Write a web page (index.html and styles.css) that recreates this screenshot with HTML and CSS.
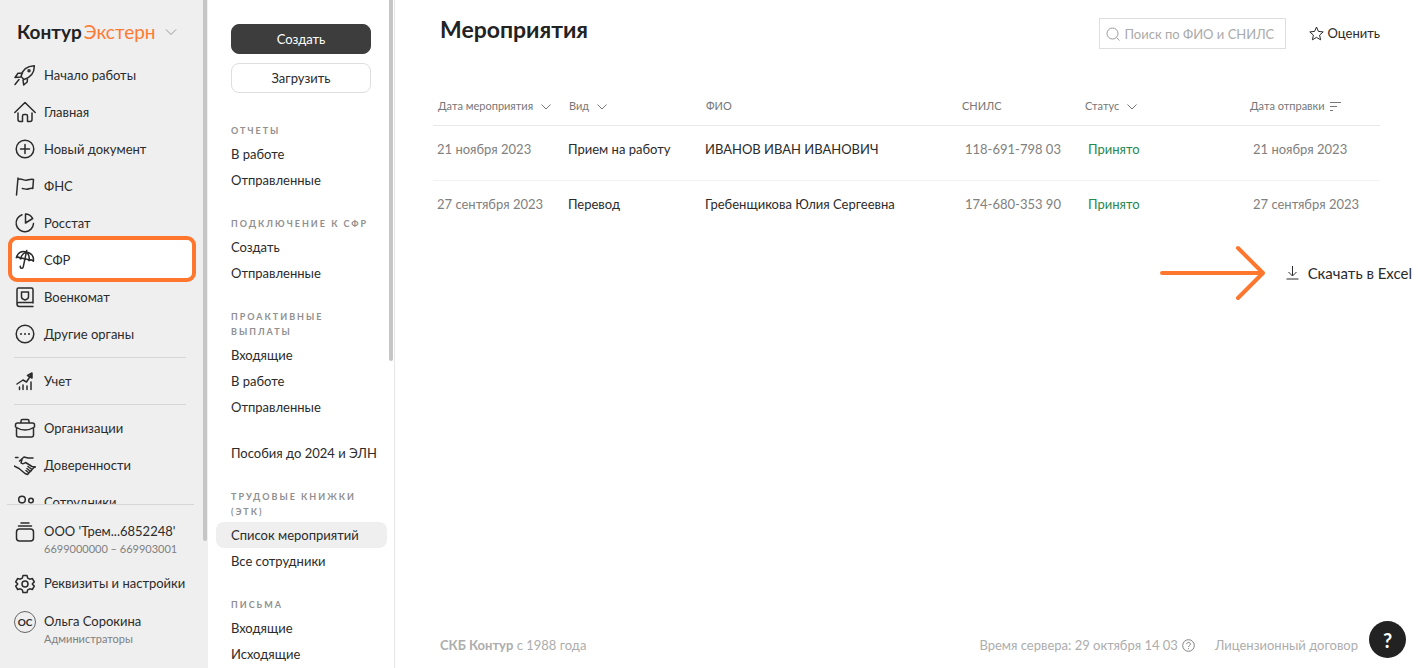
FILE: index.html
```
<!DOCTYPE html>
<html lang="ru">
<head>
    <meta charset="UTF-8">
    <meta name="viewport" content="width=device-width, initial-scale=1.0">
    <title>Мероприятия — Контур.Экстерн</title>
    <link rel="stylesheet" href="styles.css">
</head>
<body>
    <div class="app">
        <!-- Главное меню -->
        <aside class="sidebar">
            <button type="button" class="logo">
                <span class="logo-text"><b>Контур</b><span class="logo-product">Экстерн</span></span>
                <svg class="chevron" width="12" height="8" viewBox="0 0 12 8"><path d="M1 1.5l5 5 5-5"/></svg>
            </button>
            <nav class="menu">
                <a href="#" class="menu-item">
                    <svg class="icon" viewBox="0 0 22 22"><path d="M7 12.500C8 7 12 2 20.300 1.700 20.500 9 16 13.500 10 15.500zM8.500 9L4 9.300 1 13.500l5.500-.5M13.500 14l-.3 4-3.500 3-.7-5M5 15.500l-4 5"/><circle cx="15" cy="6.800" r="1"/></svg>
                    <span>Начало работы</span>
                </a>
                <a href="#" class="menu-item">
                    <svg class="icon" viewBox="0 0 22 22"><path d="M.8 11.500L11 1.500l10.200 10M4 12v6.500q0 2 2 2h2.500V15q0-1.500 1.500-1.500h2q1.500 0 1.500 1.500v5.500H16q2 0 2-2V12"/></svg>
                    <span>Главная</span>
                </a>
                <a href="#" class="menu-item">
                    <svg class="icon" viewBox="0 0 22 22"><circle cx="11" cy="11" r="8.800"/><path d="M11 6.500v9M6.500 11h9"/></svg>
                    <span>Новый документ</span>
                </a>
                <a href="#" class="menu-item">
                    <svg class="icon" viewBox="0 0 22 22"><path d="M4 3L2.500 20M4 4.500c3-2 5.500 1.300 8.500.8 2.500-.5 4-1.500 7-.8l-.7 9c-2.500-.8-4 .7-6 .8-2 0-2.500-.8-4.500-.8"/></svg>
                    <span>ФНС</span>
                </a>
                <a href="#" class="menu-item">
                    <svg class="icon" viewBox="0 0 22 22"><path d="M8 2.800a8.700 8.700 0 1 0 11.500 8.700M11.500 11V2c3 0 5.500 1.500 7.200 4.500z"/></svg>
                    <span>Росстат</span>
                </a>
                <a href="#" class="menu-item active">
                    <svg class="icon" viewBox="0 0 22 22"><g transform="rotate(12 11 11)"><path d="M2 10.500C2.500 5.500 6 2.800 10.700 2.800s8.300 2.700 8.800 7.700c-1.500-1.200-3.200-1.100-4.500.3-1.300-1.400-3-1.400-4.300 0-1.300-1.400-3-1.400-4.300 0-1.300-1.400-3-1.500-4.400-.3zM6.400 10.500c0-3.500 1.600-6 4.300-7.700 2.700 1.700 4.300 4.200 4.300 7.700M10.700 1.300V18c0 2.300-3 2.300-3 0"/></g></svg>
                    <span>СФР</span>
                </a>
                <a href="#" class="menu-item">
                    <svg class="icon" viewBox="0 0 22 22"><path d="M19 17V3.500Q19 2 17.500 2h-13Q3 2 3 3.500V18q0 2.500 2.500 2.500H19M3 18q0-1.500 1.500-1.500H19M7.500 6h7v5q0 2-3.500 3-3.500-1-3.500-3z"/></svg>
                    <span>Военкомат</span>
                </a>
                <a href="#" class="menu-item">
                    <svg class="icon" viewBox="0 0 22 22"><circle cx="11" cy="11" r="8.800"/><path class="dots" d="M7 11h.01M11 11h.01M15 11h.01"/></svg>
                    <span>Другие органы</span>
                </a>
                <hr class="menu-line">
                <a href="#" class="menu-item">
                    <svg class="icon" viewBox="0 0 22 22"><path d="M3 14l6-4 3.500 2L17 5M13.500 5.500L18 3v5zM5.500 17v2.500M9 15v4.500M13 16v3.500M17 12v7.500"/></svg>
                    <span>Учет</span>
                </a>
                <hr class="menu-line">
                <a href="#" class="menu-item">
                    <svg class="icon" viewBox="0 0 22 22"><path d="M7 5.500V4q0-1.500 1.500-1.500h5Q15 2.500 15 4v1.500M3.500 6h15Q20.500 6 20.500 8v2Q16 13 11 13T1.500 10V8q0-2 2-2zM2.500 11.500V18q0 2 2 2h13q2 0 2-2v-6.500"/></svg>
                    <span>Организации</span>
                </a>
                <a href="#" class="menu-item">
                    <svg class="icon" viewBox="0 0 22 22"><path d="M1.500 3.500H4M0 12l5 2.500 6 5 2.500 1 1.500-1.500-3-2.500M14.500 19l2-1.500-3.500-3M16.500 17.500l1.500-2-4-3M18 15.500l2-2M5.500 7L10 3l4 1h5M8 5.500L7 9q2 1.500 4.500-.5L14 10l4 2.500 4 .5"/></svg>
                    <span>Доверенности</span>
                </a>
                <a href="#" class="menu-item">
                    <svg class="icon" viewBox="0 0 22 22"><circle cx="8" cy="8.500" r="3.300"/><circle cx="17" cy="9.500" r="2.300"/><path d="M3 17q0-3.500 5-3.500t5 3.500"/></svg>
                    <span>Сотрудники</span>
                </a>
            </nav>
            <div class="account">
                <a href="#" class="account-item">
                    <svg class="icon" viewBox="0 0 22 22"><path d="M7 2h8M4.500 5h13"/><rect x="2.500" y="8" width="17" height="12" rx="3"/></svg>
                    <span>ООО 'Трем...6852248'<small>6699000000 – 669903001</small></span>
                </a>
                <a href="#" class="account-item">
                    <svg class="icon" viewBox="0 0 22 22"><circle cx="11" cy="11" r="3"/><path d="M9 2.500h4l.7 2.600 2 1.100 2.600-.7 2 3.400-1.900 1.900v.4l1.900 1.900-2 3.400-2.600-.7-2 1.100-.7 2.600H9l-.7-2.600-2-1.100-2.600.7-2-3.400 1.900-1.900v-.4L1.700 8.900l2-3.400 2.600.7 2-1.100z"/></svg>
                    <span>Реквизиты и настройки</span>
                </a>
                <a href="#" class="account-item">
                    <span class="avatar">ОС</span>
                    <span>Ольга Сорокина<small>Администраторы</small></span>
                </a>
            </div>
        </aside>

        <!-- Меню раздела СФР -->
        <aside class="submenu">
            <div class="submenu-buttons">
                <button type="button" class="btn btn-dark">Создать</button>
                <button type="button" class="btn">Загрузить</button>
            </div>
            <nav>
                <h3>Отчеты</h3>
                <a href="#">В работе</a>
                <a href="#">Отправленные</a>
                <h3>Подключение к СФР</h3>
                <a href="#">Создать</a>
                <a href="#">Отправленные</a>
                <h3>Проактивные выплаты</h3>
                <a href="#">Входящие</a>
                <a href="#">В работе</a>
                <a href="#">Отправленные</a>
                <a href="#" class="separate">Пособия до 2024 и ЭЛН</a>
                <h3>Трудовые книжки (ЭТК)</h3>
                <a href="#" class="current">Список мероприятий</a>
                <a href="#">Все сотрудники</a>
                <h3>Письма</h3>
                <a href="#">Входящие</a>
                <a href="#">Исходящие</a>
            </nav>
        </aside>

        <main class="content">
            <header class="page-header">
                <h1>Мероприятия</h1>
                <label class="search">
                    <svg width="14" height="14" viewBox="0 0 14 14"><circle cx="6.500" cy="6.500" r="5.500"/><path d="M10.500 10.500l3 3"/></svg>
                    <input type="text" placeholder="Поиск по ФИО и СНИЛС" aria-label="Поиск по ФИО и СНИЛС">
                </label>
                <button type="button" class="rate">
                    <svg width="15" height="15" viewBox="0 0 15 15"><path d="M7.500 1l1.900 4.400 4.800.5-3.600 3.200 1 4.700-4.100-2.400-4.100 2.400 1-4.700L.8 5.900l4.800-.5z"/></svg>
                    Оценить
                </button>
            </header>

            <table class="events">
                <colgroup>
                    <col class="col-date">
                    <col class="col-type">
                    <col class="col-name">
                    <col class="col-snils">
                    <col class="col-status">
                    <col>
                </colgroup>
                <thead>
                    <tr>
                        <th>Дата мероприятия <svg class="arrow" width="10" height="6" viewBox="0 0 10 6"><path d="M.5 .5L5 5l4.500-4.500"/></svg></th>
                        <th>Вид <svg class="arrow" width="10" height="6" viewBox="0 0 10 6"><path d="M.5 .5L5 5l4.500-4.500"/></svg></th>
                        <th>ФИО</th>
                        <th>СНИЛС</th>
                        <th>Статус <svg class="arrow" width="10" height="6" viewBox="0 0 10 6"><path d="M.5 .5L5 5l4.500-4.500"/></svg></th>
                        <th>Дата отправки <svg class="sort" width="12" height="9" viewBox="0 0 12 9"><path d="M1 .5h11M1 4.500h7M1 8.500h3"/></svg></th>
                    </tr>
                </thead>
                <tbody>
                    <tr>
                        <td class="muted">21 ноября 2023</td>
                        <td>Прием на работу</td>
                        <td>ИВАНОВ ИВАН ИВАНОВИЧ</td>
                        <td class="muted shifted">118-691-798 03</td>
                        <td class="accepted shifted">Принято</td>
                        <td class="muted shifted">21 ноября 2023</td>
                    </tr>
                    <tr>
                        <td class="muted">27 сентября 2023</td>
                        <td>Перевод</td>
                        <td>Гребенщикова Юлия Сергеевна</td>
                        <td class="muted shifted">174-680-353 90</td>
                        <td class="accepted shifted">Принято</td>
                        <td class="muted shifted">27 сентября 2023</td>
                    </tr>
                </tbody>
            </table>

            <div class="export">
                <svg class="pointer" width="106" height="56" viewBox="0 0 106 56"><path d="M2 28h101M78 3l25 25-25 25"/></svg>
                <a href="#" class="download">
                    <svg width="13" height="14" viewBox="0 0 13 14"><path d="M6.500 0v9.500M2.500 6l4 4 4-4M.5 13h12"/></svg>
                    Скачать в Excel
                </a>
            </div>

            <footer class="footer">
                <span class="company"><b>СКБ Контур</b> с 1988 года</span>
                <span class="server-time">
                    Время сервера: 29 октября 14 03
                    <svg width="13" height="13" viewBox="0 0 13 13"><circle cx="6.500" cy="6.500" r="5.800"/><path d="M4.700 5.200c0-2.400 3.700-2.400 3.700 0 0 1.300-1.900 1.300-1.900 2.800M6.500 9.200v1"/></svg>
                </span>
                <a href="#">Лицензионный договор</a>
            </footer>
        </main>
    </div>
    <button type="button" class="help" aria-label="Помощь">?</button>
</body>
</html>
```
FILE: styles.css
```
* {
    box-sizing: border-box;
}
body {
    margin: 0;
    font-family: Lato, "Liberation Sans", sans-serif;
    font-size: 13px;
    line-height: 20px;
    color: #2b2b2b;
    background-color: #fff;
}
a {
    color: inherit;
    text-decoration: none;
}
button {
    font: inherit;
    color: inherit;
    cursor: pointer;
}
svg {
    flex: none;
    fill: none;
    stroke: currentColor;
}
.app {
    display: flex;
    height: 100vh;
    overflow: hidden;
}

/* Главное меню */
.sidebar {
    position: relative;
    display: flex;
    flex-direction: column;
    flex: none;
    width: 208px;
    background-color: #efefef;
}
.sidebar::after,
.submenu::after {
    content: "";
    position: absolute;
    top: 0;
    right: 1px;
    width: 4px;
    height: 81%;
    border-radius: 0 0 2px 2px;
    background-color: #c6c6c6;
}
.logo {
    display: flex;
    align-items: center;
    gap: 9px;
    flex: none;
    height: 56px;
    padding: 8px 0 0 17px;
    border: 0;
    background: none;
}
.logo-text {
    font-size: 19px;
    color: #222;
}
.logo-product {
    margin-left: 2px;
    color: #ff7a33;
}
.chevron {
    color: #999;
}
.menu {
    flex: 1;
    min-height: 0;
    overflow: hidden;
}
.menu-item {
    position: relative;
    display: flex;
    align-items: center;
    gap: 8px;
    height: 37px;
    padding-left: 14px;
}
.menu-item > * {
    position: relative;
}
.icon {
    width: 22px;
    height: 22px;
    stroke-width: 1.5;
    stroke-linecap: round;
    stroke-linejoin: round;
}
.icon .dots {
    stroke-width: 2;
}
.menu-item.active::before {
    content: "";
    position: absolute;
    inset: -5px 12px -4px 8px;
    border: 4px solid #ff762e;
    border-radius: 9px;
    background-color: #fff;
}
.menu-line {
    margin: 5px 22px 4px 14px;
    border: 0;
    border-top: 1px solid #d6d6d6;
}
.account {
    display: flex;
    flex-direction: column;
    gap: 16px;
    margin: 0 14px 0 7px;
    padding: 16px 0 21px 7px;
    border-top: 1px solid #d6d6d6;
}
.account-item {
    display: flex;
    gap: 8px;
    white-space: nowrap;
}
.account-item small {
    display: block;
    font-size: 11px;
    line-height: 16px;
    color: #808080;
}
.avatar {
    flex: none;
    width: 22px;
    height: 22px;
    border: 1px solid #666;
    border-radius: 50%;
    font-size: 10px;
    font-weight: bold;
    text-align: center;
}

/* Меню раздела */
.submenu {
    position: relative;
    flex: none;
    width: 187px;
    padding: 24px 7px 0 8px;
    border-right: 1px solid #e6e6e6;
    overflow: hidden;
}
.submenu::after {
    height: 54%;
}
.submenu-buttons {
    display: flex;
    flex-direction: column;
    gap: 9px;
    padding: 0 16px 0 15px;
    margin-bottom: 30px;
}
.btn {
    height: 30px;
    border: 1px solid #dedede;
    border-radius: 8px;
    background-color: #fff;
}
.btn-dark {
    border-color: #3d3d3d;
    color: #fff;
    background-color: #3d3d3d;
}
.submenu h3 {
    margin: 23px 0 3px;
    padding-left: 15px;
    font-size: 9px;
    line-height: 15px;
    letter-spacing: 2px;
    text-transform: uppercase;
    color: #909090;
}
.submenu h3:first-child {
    margin-top: 0;
}
.submenu nav a {
    display: block;
    padding: 3px 0 3px 15px;
    border-radius: 8px;
    white-space: nowrap;
}
.submenu nav .separate {
    margin-top: 20px;
}
.submenu nav .current {
    background-color: #efefef;
}

/* Содержимое */
.content {
    display: flex;
    flex-direction: column;
    flex: 1;
    min-width: 0;
    padding: 18px 38px 13px;
}
.page-header {
    display: flex;
    align-items: flex-start;
    margin-bottom: 38px;
    padding-left: 7px;
}
.page-header h1 {
    flex: 1;
    margin: 0;
    font-size: 23px;
    line-height: 22px;
    color: #222;
}
.search {
    display: flex;
    align-items: center;
    gap: 5px;
    width: 187px;
    height: 31px;
    padding: 0 5px 0 6px;
    border: 1px solid #dedede;
    color: #999;
}
.search input {
    width: 100%;
    min-width: 0;
    padding: 0;
    border: 0;
    outline: 0;
    font: inherit;
}
.search input::placeholder {
    color: #aaa;
}
.rate {
    display: flex;
    align-items: center;
    gap: 4px;
    height: 30px;
    margin-left: 23px;
    padding: 0;
    border: 0;
    background: none;
}
.events {
    width: 100%;
    table-layout: fixed;
    border-collapse: collapse;
    white-space: nowrap;
}
.col-date {
    width: 131px;
}
.col-type {
    width: 137px;
}
.col-name {
    width: 256px;
}
.col-snils {
    width: 123px;
}
.col-status {
    width: 165px;
}
.events th {
    height: 38px;
    padding: 0 0 0 5px;
    border-bottom: 1px solid #e9e9e9;
    font-size: 11px;
    font-weight: normal;
    text-align: left;
    color: #777;
}
.events .arrow {
    margin-left: 5px;
}
.events .sort {
    margin-left: 2px;
    vertical-align: middle;
}
.events td {
    height: 55px;
    padding: 13px 0 0 4px;
    vertical-align: top;
}
.events tbody tr + tr td {
    border-top: 1px solid #f2f2f2;
}
.events .shifted {
    padding-left: 8px;
}
.events .muted {
    color: #808080;
}
.events .accepted {
    color: #26884d;
}
.export {
    display: flex;
    align-items: center;
    justify-content: flex-end;
    gap: 20px;
    margin: 10px -32px 0 0;
}
.pointer {
    color: #ff762e;
    stroke-width: 4;
    stroke-linecap: round;
    stroke-linejoin: round;
}
.download {
    display: flex;
    align-items: center;
    gap: 9px;
    font-size: 15px;
}
.footer {
    display: flex;
    align-items: center;
    gap: 20px;
    margin-top: auto;
    padding: 0 22px 0 7px;
    color: #adadad;
}
.company {
    flex: 1;
}
.server-time {
    display: flex;
    align-items: center;
    gap: 4px;
}
.server-time svg {
    color: #808080;
}
.help {
    position: fixed;
    right: 12px;
    bottom: 10px;
    width: 37px;
    height: 37px;
    padding: 0;
    border: 0;
    border-radius: 50%;
    font-size: 20px;
    font-weight: bold;
    color: #fff;
    background-color: #222;
}
```
